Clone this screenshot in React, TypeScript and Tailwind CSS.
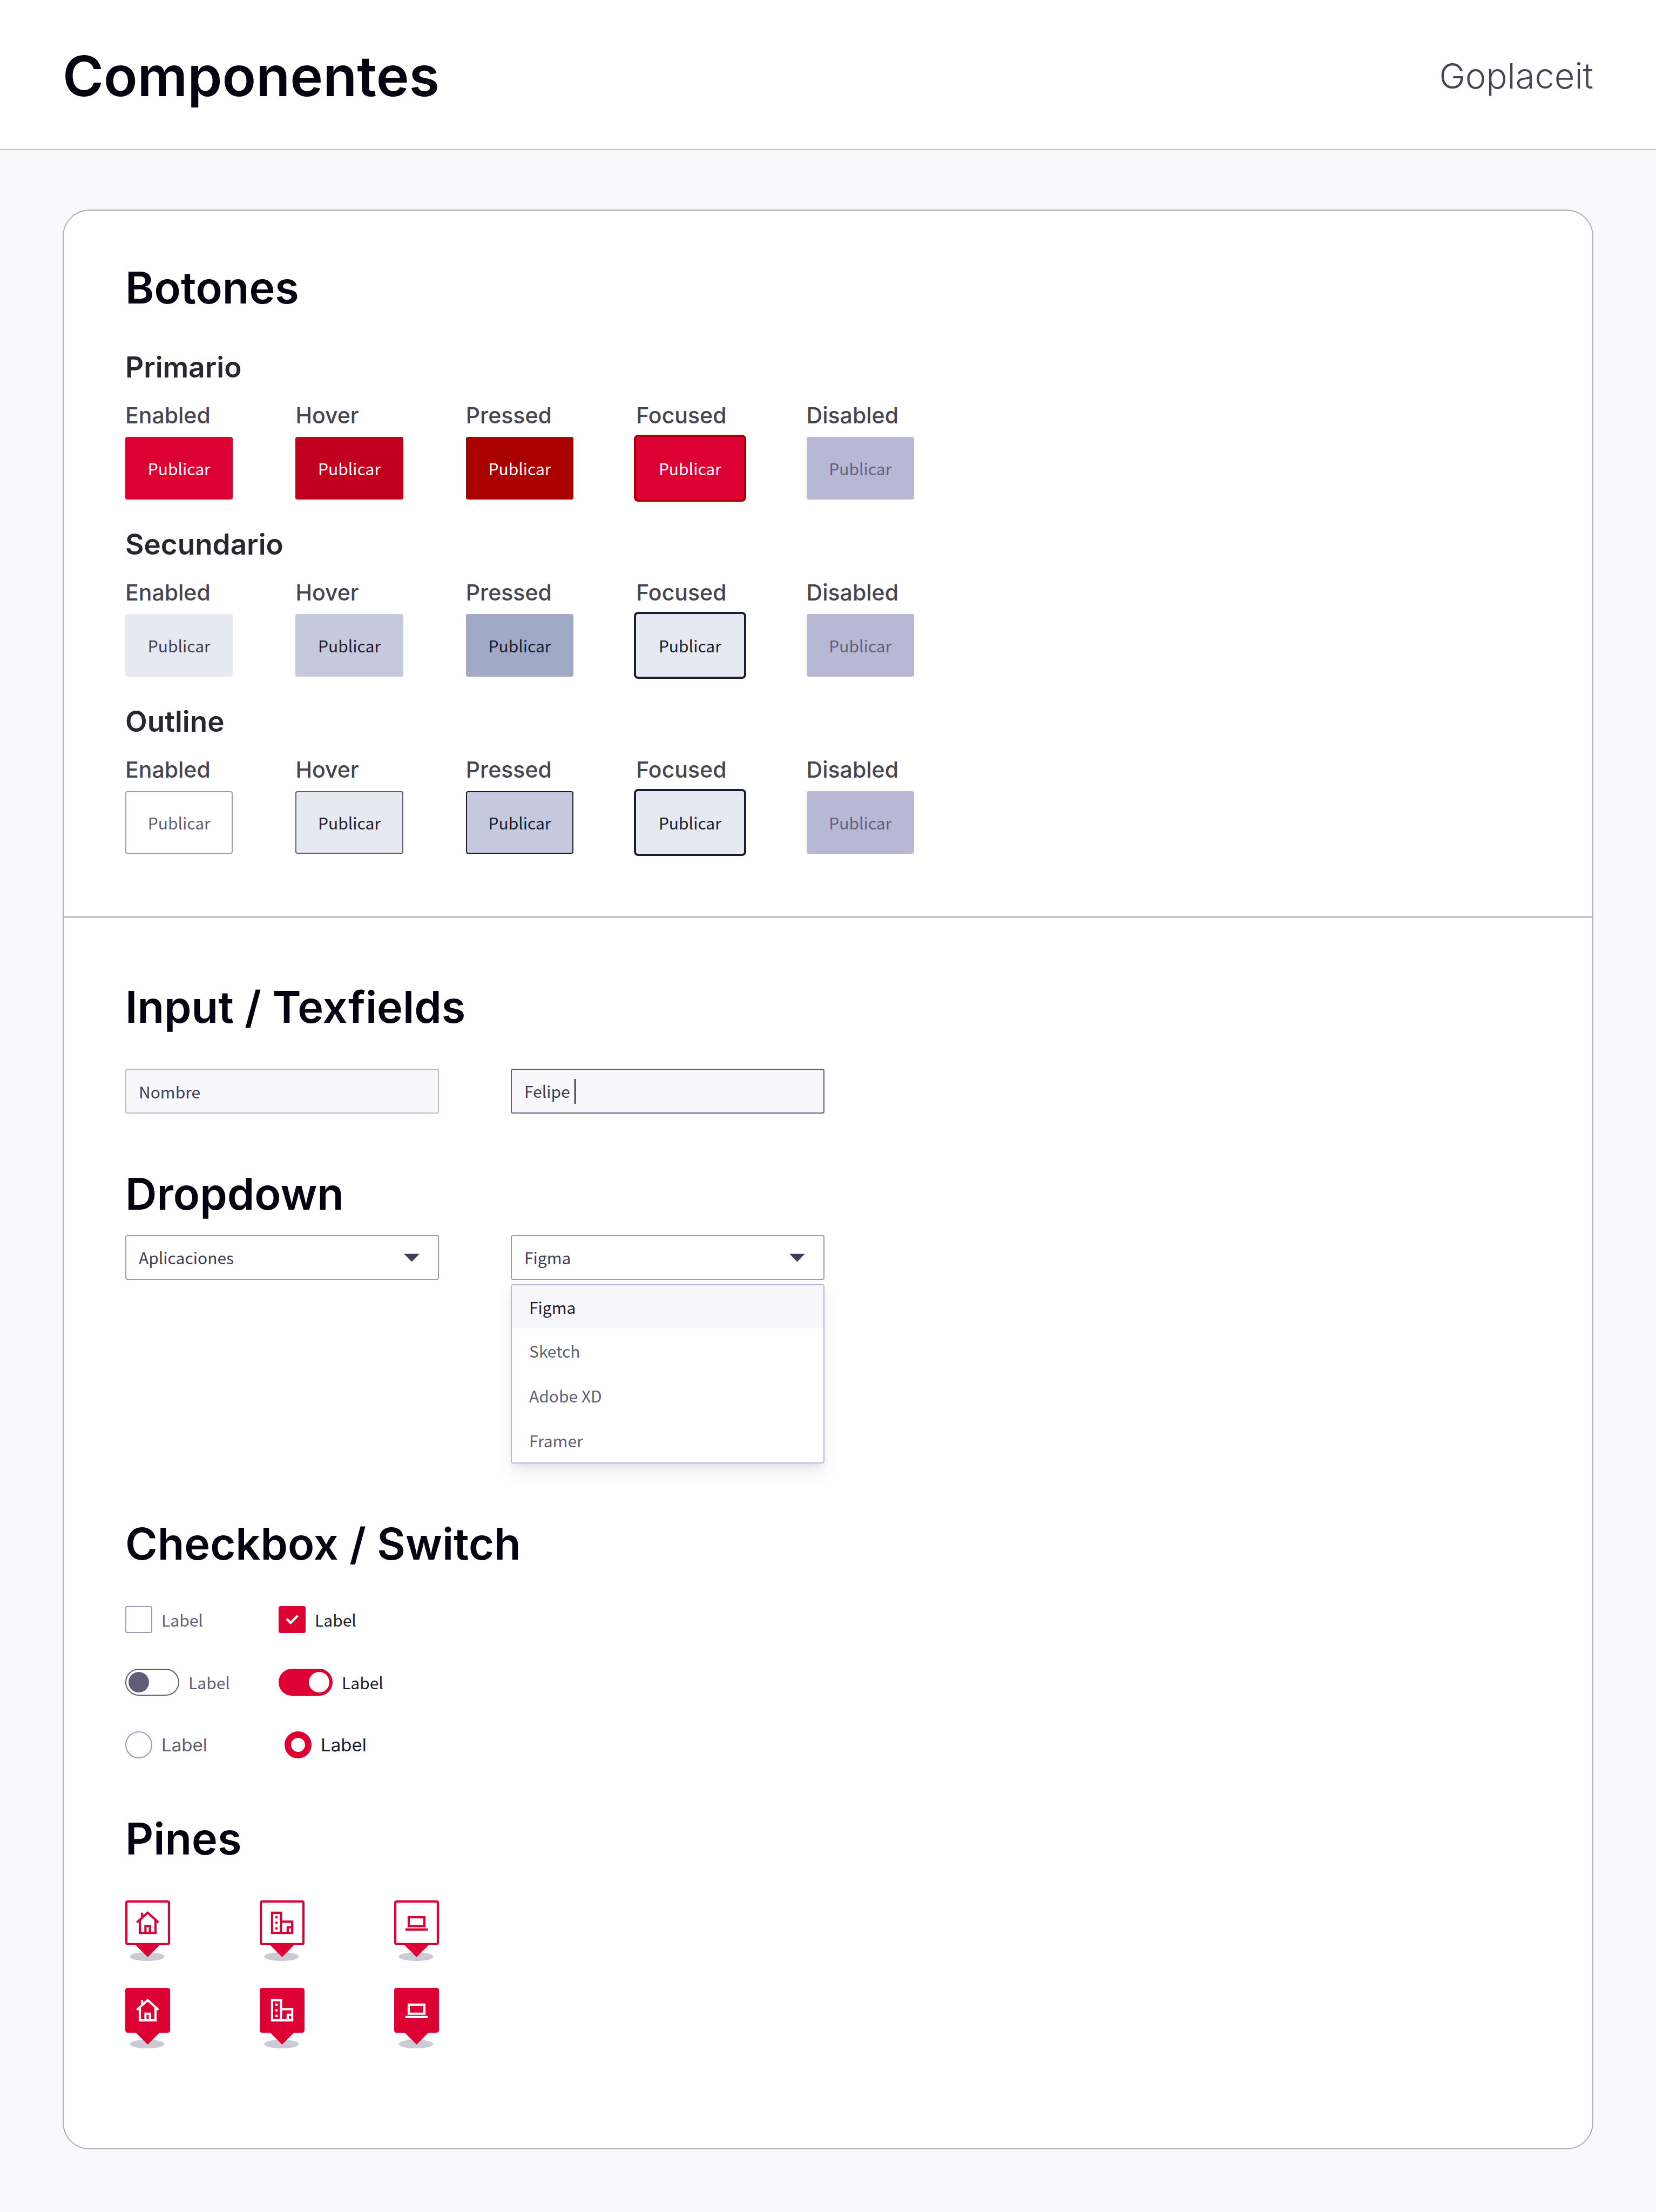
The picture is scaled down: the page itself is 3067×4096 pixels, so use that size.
import { useState } from 'react'
import type { ReactNode } from 'react'

const states = ['Enabled', 'Hover', 'Pressed', 'Focused', 'Disabled']

const buttonGroups = [
  {
    name: 'Primario',
    styles: [
      'bg-[#dd0033] text-white',
      'bg-[#c1001f] text-white',
      'bg-[#a90000] text-white',
      'bg-[#dd0033] text-white ring-4 ring-[#a90000]',
      'bg-[#b9b8d4] text-[#61607a]',
    ],
  },
  {
    name: 'Secundario',
    styles: [
      'bg-[#e6e9f1] text-[#3f3d56]',
      'bg-[#c4c9dd] text-[#1c1c30]',
      'bg-[#a0a9c6] text-[#1c1c30]',
      'bg-[#e6e9f1] text-[#1c1c30] ring-4 ring-[#1c1c30]',
      'bg-[#b9b8d4] text-[#61607a]',
    ],
  },
  {
    name: 'Outline',
    styles: [
      'bg-white text-[#605f77] border-2 border-[#9c9ab6]',
      'bg-[#e6e9f1] text-[#1c1c30] border-2 border-[#605f77]',
      'bg-[#c4c9dd] text-[#1c1c30] border-2 border-[#1c1c30]',
      'bg-[#e6e9f1] text-[#1c1c30] ring-4 ring-[#1c1c30]',
      'bg-[#b9b8d4] text-[#61607a]',
    ],
  },
]

const apps = ['Figma', 'Sketch', 'Adobe XD', 'Framer']

function Title({ id, children }: { id?: string; children: ReactNode }) {
  return (
    <h2 id={id} className="text-[81px] leading-[96px] font-semibold text-[#050310]">
      {children}
    </h2>
  )
}

function Caret() {
  return (
    <svg className="absolute right-9 top-1/2 -translate-y-1/2 w-[29px] h-[15px] pointer-events-none" viewBox="0 0 14 7" preserveAspectRatio="none">
      <path d="M0 0h14L7 7z" fill="#3f3d56" />
    </svg>
  )
}

const HouseIcon = () => (
  <>
    <path d="M10.35 19.65L20 11l9.65 8.65" />
    <path d="M13 17.5V29h14V17.5" />
    <path d="M18 29v-6h4v6" />
    <path d="M15 11v4.5" />
  </>
)

const BuildingIcon = () => (
  <>
    <path d="M11 11h8v18h-8z" />
    <path d="M19 19h10v10H19M25 29v-5h3" />
    <path d="M14 15h2M14 20h2M14 25h2" />
  </>
)

const LaptopIcon = () => (
  <>
    <path d="M13 15h14v8H13z" />
    <path d="M10 26h20" />
  </>
)

const pins = [HouseIcon, BuildingIcon, LaptopIcon]

function Pin({ filled, children }: { filled?: boolean; children: ReactNode }) {
  return (
    <svg className="w-[83px] h-28" viewBox="0 0 40 54" fill="none">
      <ellipse cx="19.5" cy="50.1" rx="15.5" ry="3.9" fill="#cccbd5" />
      <path d="M9.3 39.9h21.4L20 50.6z" fill="#dd0033" />
      <rect width="40" height="40" rx="2" fill="#dd0033" />
      {!filled && <rect x="2" y="2" width="36" height="36" fill="#fff" />}
      <g stroke={filled ? '#fff' : '#dd0033'} strokeWidth="2">
        {children}
      </g>
    </svg>
  )
}

export default function App() {
  const [name, setName] = useState('Felipe')
  const [app, setApp] = useState('Figma')

  const field = 'h-[83px] w-full rounded border-2 pl-[23px] text-[30px]'
  const cjk = 'font-["Noto_Sans_CJK_JP",sans-serif]'

  return (
    <div className="min-h-screen bg-[#fafafc] font-[Inter,sans-serif]">
      {/* Header */}
      <header className="flex items-center justify-between bg-white border-b-2 border-[#c6c4d0] px-[116px] pt-[77px] pb-[71px]">
        <h1 className="text-[103px] leading-[128px] font-semibold text-[#050310]">Componentes</h1>
        <p className="text-[65px] leading-[80px] font-light text-[#474552]">Goplaceit</p>
      </header>

      <main className="px-[116px] pt-[110px] pb-[116px]">
        <div className="bg-white border-2 border-[#aeacba] rounded-[50px]">
          {/* Buttons */}
          <section className="px-[114px] pt-[95px] pb-[116px] border-b-2 border-[#a19fad]">
            <Title>Botones</Title>
            <div className="mt-[67px] flex flex-col gap-[51px]">
              {buttonGroups.map((group) => (
                <div key={group.name}>
                  <h3 className="text-[53px] leading-[64px] font-semibold text-[#28272f]">{group.name}</h3>
                  <div className="mt-[29px] grid grid-cols-5 gap-x-[116px] max-w-[1461px]">
                    {states.map((state, i) => (
                      <div key={state}>
                        <p className="text-[41px] leading-[56px] font-medium text-[#474552]">{state}</p>
                        <button
                          type="button"
                          disabled={state === 'Disabled'}
                          className={`mt-3 h-[116px] w-full rounded text-[30px] ${cjk} ${group.styles[i]}`}
                        >
                          Publicar
                        </button>
                      </div>
                    ))}
                  </div>
                </div>
              ))}
            </div>
          </section>

          <div className="px-[114px] pt-[118px] pb-[185px] flex flex-col gap-[101px]">
            {/* Text fields */}
            <section>
              <Title id="inputs">Input / Texfields</Title>
              <div className={`mt-[66px] grid grid-cols-2 gap-x-[133px] max-w-[1295px] ${cjk}`}>
                <input
                  type="text"
                  aria-labelledby="inputs"
                  placeholder="Nombre"
                  className={`${field} bg-[#f8f8fb] border-[#b9b8d4] text-[#3f3d56] placeholder-[#3f3d56] outline-none`}
                />
                <div className={`${field} flex items-center gap-2 bg-[#f8f8fb] border-[#605f77]`}>
                  <input
                    type="text"
                    aria-labelledby="inputs"
                    value={name}
                    onChange={(e) => setName(e.target.value)}
                    className="field-sizing-content text-[#3f3d56] outline-none"
                  />
                  <span className="h-[46px] w-[2px] bg-[#050310]" />
                </div>
              </div>
            </section>

            {/* Dropdowns */}
            <section>
              <Title id="dropdown">Dropdown</Title>
              <div className={`mt-7 grid grid-cols-2 gap-x-[133px] max-w-[1295px] ${cjk}`}>
                <div className="relative self-start">
                  <select aria-labelledby="dropdown" className={`${field} appearance-none bg-white border-[#9c9ab6] text-[#3f3d56]`}>
                    <option>Aplicaciones</option>
                  </select>
                  <Caret />
                </div>
                <div>
                  <div className="relative">
                    <select
                      aria-labelledby="dropdown"
                      value={app}
                      onChange={(e) => setApp(e.target.value)}
                      className={`${field} appearance-none bg-white border-[#9c9ab6] text-[#3f3d56]`}
                    >
                      {apps.map((a) => (
                        <option key={a}>{a}</option>
                      ))}
                    </select>
                    <Caret />
                  </div>
                  <ul className="mt-2 grid grid-rows-[80px_83px_83px_82px] rounded border-2 border-[#b9b8d4] bg-white text-[30px] shadow-[0_16px_32px_rgba(63,61,86,0.08),0_10px_16px_-8px_rgba(63,61,86,0.16)]">
                    {apps.map((a) => (
                      <li key={a} className="flex">
                        <button
                          type="button"
                          onClick={() => setApp(a)}
                          className={`w-full pl-8 text-left ${a === app ? 'bg-[#f8f8fb] text-[#1c1c30]' : 'text-[#605f77]'}`}
                        >
                          {a}
                        </button>
                      </li>
                    ))}
                  </ul>
                </div>
              </div>
            </section>

            {/* Checkbox, switch and radio */}
            <section>
              <Title>Checkbox / Switch</Title>
              <div className="mt-[67px] flex flex-col gap-[66px] text-[30px] leading-[50px]">
                <div className={`grid grid-cols-[284px_auto] justify-start ${cjk}`}>
                  <label className="flex items-center gap-[17px] text-[#605f77]">
                    <input type="checkbox" className="appearance-none size-[50px] rounded border-2 border-[#9c9ab6]" />
                    Label
                  </label>
                  <label className="flex items-center gap-[17px] text-[#1c1c30]">
                    <span className="relative size-[50px]">
                      <input type="checkbox" defaultChecked className="peer appearance-none block size-[50px] rounded border-2 border-[#9c9ab6] checked:bg-[#dd0033] checked:border-[#dd0033]" />
                      <svg className="absolute inset-0 hidden peer-checked:block pointer-events-none" viewBox="0 0 24 24" fill="none" stroke="#fff" strokeWidth="2">
                        <path d="M7.1 11.4l3.5 3.5 6.4-6.4" />
                      </svg>
                    </span>
                    Label
                  </label>
                </div>

                <div className={`grid grid-cols-[284px_auto] justify-start ${cjk}`}>
                  <label className="flex items-center gap-[17px] text-[#605f77]">
                    <input
                      type="checkbox"
                      role="switch"
                      className="appearance-none flex items-center h-[50px] w-[100px] rounded-full border-2 border-[#605f77] px-1 before:size-[38px] before:rounded-full before:bg-[#605f77] checked:justify-end checked:bg-[#dd0033] checked:border-[#dd0033] checked:before:bg-white"
                    />
                    Label
                  </label>
                  <label className="flex items-center gap-[17px] text-[#1c1c30]">
                    <input
                      type="checkbox"
                      role="switch"
                      defaultChecked
                      className="appearance-none flex items-center h-[50px] w-[100px] rounded-full border-2 border-[#605f77] px-1 before:size-[38px] before:rounded-full before:bg-[#605f77] checked:justify-end checked:bg-[#dd0033] checked:border-[#dd0033] checked:before:bg-white"
                    />
                    Label
                  </label>
                </div>

                <div className="grid grid-cols-[295px_auto] justify-start text-[33px]">
                  <label className="flex items-center gap-[17px] leading-[50px] text-[#605f77]">
                    <input type="radio" name="option" className="appearance-none size-[50px] rounded-full border-2 border-[#9c9ab6] checked:border-12 checked:border-[#dd0033]" />
                    Label
                  </label>
                  <label className="flex items-center gap-[17px] leading-[50px] text-[#1c1c30]">
                    <input type="radio" name="option" defaultChecked className="appearance-none size-[50px] rounded-full border-2 border-[#9c9ab6] checked:border-12 checked:border-[#dd0033]" />
                    Label
                  </label>
                </div>
              </div>
            </section>

            {/* Map pins */}
            <section>
              <Title>Pines</Title>
              <div className="mt-[66px] flex flex-col gap-[50px]">
                {[false, true].map((filled) => (
                  <div key={String(filled)} className="flex gap-[166px]">
                    {pins.map((Icon, i) => (
                      <Pin key={i} filled={filled}>
                        <Icon />
                      </Pin>
                    ))}
                  </div>
                ))}
              </div>
            </section>
          </div>
        </div>
      </main>
    </div>
  )
}
